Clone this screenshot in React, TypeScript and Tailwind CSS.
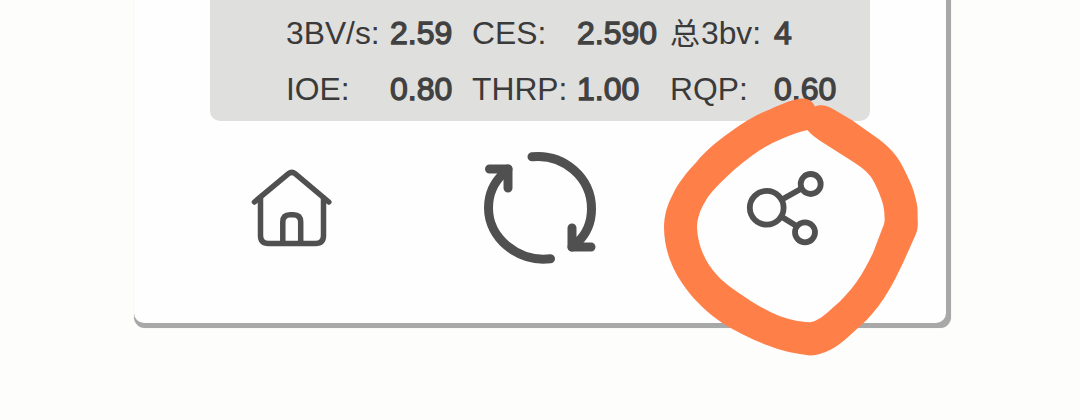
const rows = [
  [
    { label: "3BV/s:", value: "2.59" },
    { label: "CES:", value: "2.590" },
    { prefix: "总", label: "3bv:", value: "4" },
  ],
  [
    { label: "IOE:", value: "0.80" },
    { label: "THRP:", value: "1.00" },
    { label: "RQP:", value: "0.60" },
  ],
];

function Stats() {
  return (
    <div className="ml-[76px] h-[121px] w-[660px] rounded-b-[10px] bg-[#dfdfde] pt-[5px] pl-[76px] text-[32px] leading-[56px] text-[#3a3a3a]">
      {rows.map((row, i) => (
        <div key={i} className="grid h-[56px] grid-cols-[104px_82px_105px_93px_104px_90px] whitespace-nowrap">
          {row.map((s) => (
            <div key={s.label} className="contents">
              <span className="text-[31.8px]">
                {s.prefix && <span className="inline-block w-[31px] text-[30px] leading-none">{s.prefix}</span>}
                {s.label}
              </span>
              <span className="text-[#414141] [-webkit-text-stroke:1.3px_#414141]">{s.value}</span>
            </div>
          ))}
        </div>
      ))}
    </div>
  );
}

function HomeIcon() {
  return (
    <svg width="110" height="100" viewBox="240 155 110 100" fill="none" stroke="#505050" strokeWidth="5.5" strokeLinecap="round" strokeLinejoin="round">
      <path d="M254.5 202 L288.5 173.7 Q291.8 171 295.1 173.7 L328.8 202" />
      <path d="M260.5 198V235.5Q260.5 243.5 268.5 243.5H315.5Q323.5 243.5 323.5 235.5V198" />
      <path d="M282.8 243V222Q282.8 214.7 290 214.7H293.5Q300.7 214.7 300.7 222V243" strokeLinecap="butt" />
    </svg>
  );
}

function RefreshIcon() {
  return (
    <svg width="140" height="135" viewBox="470 140 140 135" fill="none" stroke="#505050" strokeWidth="9" strokeLinecap="round" strokeLinejoin="round">
      <path d="M532 156.8C563 153.5 591.5 177 591.5 209C591.5 223 586.5 234 577 243" />
      <path d="M550.5 258.7C518 262.5 488.5 238 488.5 208C488.5 194 494 182 504 173" />
      <path d="M489.5 169H508V188" />
      <path d="M572 228V247H591" />
      <path d="M508 169L502 175M572 247L578 241" />
    </svg>
  );
}

function ShareIcon() {
  return (
    <svg width="100" height="95" viewBox="735 160 100 95" fill="none" stroke="#505050" strokeWidth="5.8">
      <circle cx="766.7" cy="207.8" r="16.9" />
      <circle cx="810.7" cy="184" r="10" />
      <circle cx="805" cy="232.3" r="10" />
      <path d="M782 199.5L802.5 188M782 217L796.5 226" />
    </svg>
  );
}

export default function App() {
  return (
    <main className="relative h-[420px] w-[1080px] overflow-hidden bg-[#fdfdfb] pl-[134px] [font-family:'Liberation_Sans','Noto_Sans_CJK_SC',sans-serif]">
      <section className="h-[328px] w-[817px] rounded-b-[11px] bg-[#a8a8a8] shadow-[0_0_1px_#c8c8c8]">
        <div className="h-[323px] w-[812px] rounded-b-[10px] bg-[#fefefe]">
          <Stats />
          <nav className="flex items-start pt-[19px] pl-[106px]">
            <button aria-label="Home" className="mt-[15px]"><HomeIcon /></button>
            <button aria-label="Refresh" className="ml-[120px]"><RefreshIcon /></button>
            <button aria-label="Share" className="mt-[20px] ml-[125px]"><ShareIcon /></button>
          </nav>
        </div>
      </section>
      <svg className="pointer-events-none absolute top-0 left-0" width="1080" height="420" fill="#ff7f49">
        <path
          fillRule="evenodd"
          d="M815 106.5C812 100 807 98 801 98.5C789 100 778 106 766.5 110.7C754 116 743 123 733 130C720 139 707 149 696.7 161.7C687 172 678 183 673 194C667 205 664 216 664 227C664 238 666 249 670 260C674 271 680 281 687 290C696 302 709 314 723 323.5C737 332 751 339 766.7 345C781 351 797 354 810 355.4C817 355.5 824 353 830 350C836 347 842 342 847 338L866.7 320C875 311 882 302 888 291.7C894 282 898 273 903 263L915.5 235C918 229 918 225 917.7 220C917.5 214 918 209 916.7 203C915 195 913 188 910 181.7C906 173 902 164 896.7 156.7C892 150 886 145 880 140L851.7 120L833 109C827 105 820 104 815 106.5Z
          M807.5 130C791 134 775 141 760 150C748 158 737 167 726.7 176.7C717 186 709 194 705 202C700 210 697 219 697 228C698 246 705 262 716.5 274.5C721 280 729 286 737 291.7C749 300 763 309 777 315C787 319 799 322 810 322.3C812 322 814 321.5 816.7 320C823 317 828 312 833 307.5C842 300 850 291 856.7 281.7C863 273 868 263 873 253L882.5 228C884.5 224 885 220 884.5 216.7C884.5 211 883.5 205 881.7 200C879 192 876 185 871.7 178C867 171 860 166 853 161.7L820 140.7C813 136 811 134 807.5 130Z"
        />
      </svg>
    </main>
  );
}
